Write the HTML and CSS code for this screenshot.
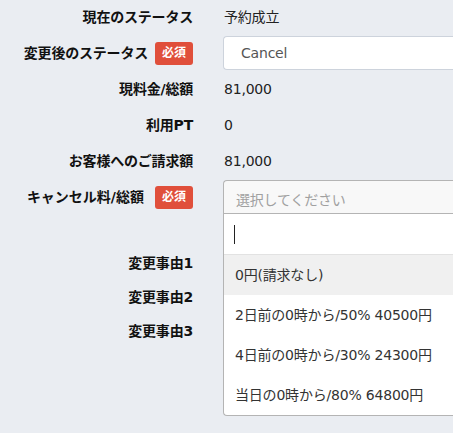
FILE: index.html
```html
<!DOCTYPE html>
<html lang="ja">
<head>
<meta charset="utf-8">
<link rel="stylesheet" href="styles.css">
</head>
<body>
<div class="form">
  <div class="row">
    <div class="label"><span class="label-text">現在のステータス</span></div>
    <div class="value"><span class="text">予約成立</span></div>
  </div>
  <div class="row">
    <div class="label"><span class="label-text">変更後のステータス</span><span class="badge">必須</span></div>
    <div class="value"><div class="input">Cancel</div></div>
  </div>
  <div class="row">
    <div class="label"><span class="label-text">現料金/総額</span></div>
    <div class="value"><span class="text">81,000</span></div>
  </div>
  <div class="row">
    <div class="label"><span class="label-text">利用PT</span></div>
    <div class="value"><span class="text">0</span></div>
  </div>
  <div class="row">
    <div class="label"><span class="label-text">お客様へのご請求額</span></div>
    <div class="value"><span class="text">81,000</span></div>
  </div>
  <div class="row">
    <div class="label"><span class="label-text wide-gap">キャンセル料/総額</span><span class="badge">必須</span></div>
    <div class="value">
      <div class="select">
        <div class="select-box">選択してください</div>
        <div class="dropdown">
          <div class="search"><span class="caret"></span></div>
          <ul class="options">
            <li class="option highlighted">0円(請求なし)</li>
            <li class="option">2日前の0時から/50% 40500円</li>
            <li class="option">4日前の0時から/30% 24300円</li>
            <li class="option">当日の0時から/80% 64800円</li>
          </ul>
        </div>
      </div>
    </div>
  </div>
  <div class="reasons">
    <div class="row reason">
      <div class="label"><span class="label-text">変更事由1</span></div>
      <div class="value"></div>
    </div>
    <div class="row reason">
      <div class="label"><span class="label-text">変更事由2</span></div>
      <div class="value"></div>
    </div>
    <div class="row reason">
      <div class="label"><span class="label-text">変更事由3</span></div>
      <div class="value"></div>
    </div>
  </div>
</div>
</body>
</html>
```

FILE: styles.css
```css
html, body {
  margin: 0;
  padding: 0;
  background: #eaedf2;
  overflow: hidden;
}
body {
  width: 453px;
  height: 433px;
  font-family: "DejaVu Sans", "Noto Sans CJK JP", sans-serif;
  font-size: 14px;
  letter-spacing: -0.2px;
  color: #333;
}
.form {
  display: flex;
  flex-direction: column;
  gap: 2px;
}
.row {
  display: flex;
  align-items: center;
  height: 34px;
}
.label {
  width: 193px;
  flex: none;
  display: flex;
  justify-content: flex-end;
  align-items: center;
  gap: 7px;
}
.label-text {
  font-weight: bold;
  color: #111;
  line-height: 20px;
  white-space: nowrap;
}
.label-text.wide-gap {
  margin-right: 4px;
  letter-spacing: 0;
}
.badge {
  background: #e04f3b;
  color: #fff;
  font-weight: bold;
  font-size: 12px;
  letter-spacing: 0;
  line-height: 23px;
  height: 23px;
  width: 38px;
  text-align: center;
  border-radius: 3px;
}
.value {
  margin-left: 30px;
  flex: 1;
  min-width: 0;
  display: flex;
  align-items: center;
  height: 100%;
}
.text {
  padding-left: 1px;
  line-height: 20px;
  color: #222;
}
.input {
  box-sizing: border-box;
  width: 100%;
  height: 34px;
  border: 1px solid #cdd3dc;
  border-right: none;
  border-radius: 4px 0 0 4px;
  background: #fff;
  padding-left: 17px;
  line-height: 32px;
  color: #555;
}
.select {
  position: relative;
  width: 100%;
  height: 34px;
}
.select-box {
  box-sizing: border-box;
  height: 34px;
  border: 1px solid #b4b4b4;
  border-right: none;
  border-radius: 4px 0 0 0;
  background: #f8f8f8;
  padding-left: 12px;
  line-height: 39px;
  color: #a0a0a0;
}
.dropdown {
  position: absolute;
  top: 34px;
  left: 0;
  right: 0;
  background: #fff;
  border-left: 1px solid #b4b4b4;
  border-bottom: 1px solid #b4b4b4;
  border-radius: 0 0 0 4px;
  z-index: 10;
}
.search {
  height: 40px;
  border-bottom: 1px solid #e2e2e2;
  display: flex;
  align-items: center;
  padding-left: 10px;
}
.caret {
  width: 1px;
  height: 19px;
  background: #222;
}
.options {
  list-style: none;
  margin: 0;
  padding: 0;
}
.option {
  height: 40px;
  line-height: 40px;
  padding-left: 11px;
  color: #333;
  white-space: nowrap;
}
.option.highlighted {
  background: #f0f0f0;
}
.reasons {
  margin-top: 30px;
  display: flex;
  flex-direction: column;
}
.row.reason {
  height: 34px;
}
```
